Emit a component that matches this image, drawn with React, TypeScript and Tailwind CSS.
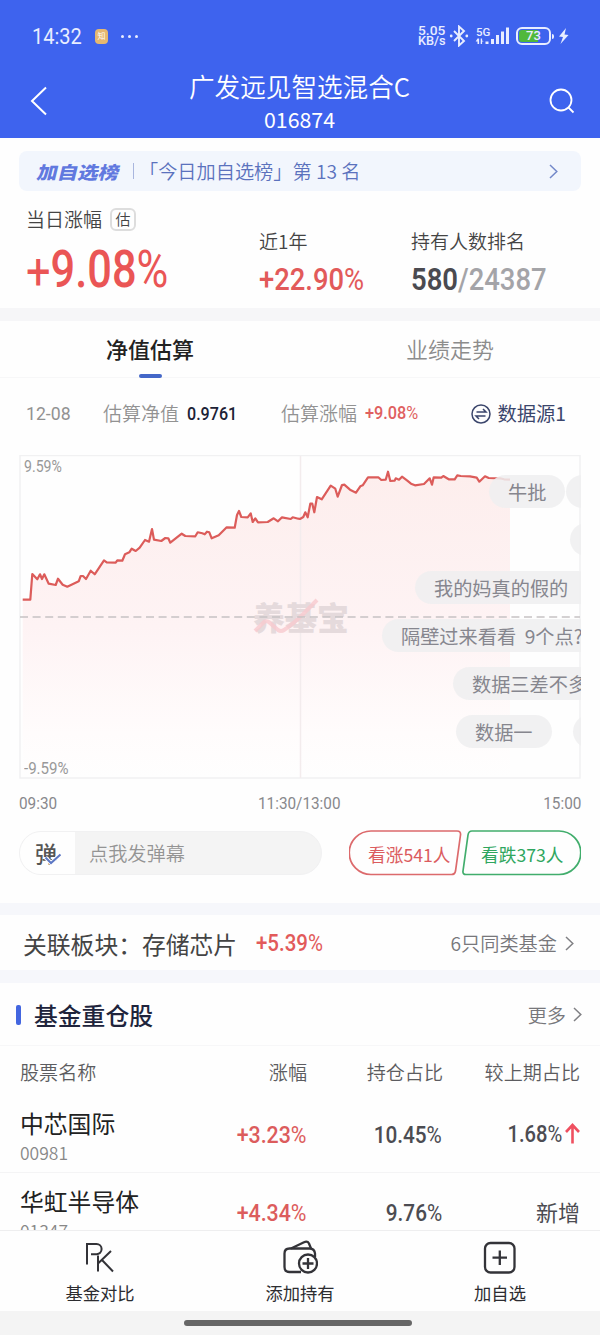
import type { ReactNode } from "react";
import clsx from "clsx";

const linePoints =
  "3.7,144.7 11.3,144.7 13.3,119 18.3,124.3 21,119.3 23,124 25.3,119.3 29.7,128.7 36.7,130 39,123.7 43.7,129.7 48.3,131.7 59.7,126.3 61.7,121 64,121 67,124 71.7,115.7 75.7,119.3 85,105.3 87.7,107.3 96.7,107.7 98.3,105.3 103.3,105.7 106,99.3 110.3,97.3 112.7,93.7 116.7,96 120.7,92.7 126,85 130,86.7 133,74 135,84.7 142.3,86 146.3,83 149.3,83.3 151.3,87.7 162.7,78.7 166.3,81 176.3,81.3 178.7,77.3 183.3,78.3 185.7,79.3 188,76.7 190.3,77.3 192.7,83.3 199.7,80.3 207.7,72.3 215.7,72.7 218,60 220,56 222.3,62 228.7,62.3 231.7,58.3 233.7,67 236.3,63.3 239,67.3 248.7,67 254.7,63.3 259,66.3 263,62.3 271.7,64 273.7,62.3 279.3,63.7 281,64 284.3,62 286.3,57.3 288.7,62.3 291.3,48.7 293.3,48.7 295.3,57.3 298,42 302.7,44.3 311.7,30.7 316.3,33.7 318.7,41.7 323,30 325.3,29.7 331,34.7 337,37.7 341.3,31.3 343.7,30.3 349,22.3 359.3,22.3 362.3,25 366.7,24.7 369,16.7 371.3,26 375.7,25.7 376.7,23.3 380,24.7 383,21.7 388.3,25.7 392,28.7 396,30.3 405,29 410.7,23.3 413,29.7 414.7,22.3 422.3,22.7 424.3,21 429.7,24.3 435.7,24.3 438.3,20.3 441.7,21 451,21.3 457.7,22.7 460.3,26.7 466,21.3 469.7,23 481,23.3 485,24.3 491,24.7";

// Condensed figures
const Num = ({
  className,
  children,
}: {
  className?: string;
  children: ReactNode;
}) => (
  <span
    className={clsx(
      "inline-block whitespace-nowrap font-['Roboto',sans-serif]",
      className
    )}
  >
    {children}
  </span>
);

const Chevron = ({ className }: { className?: string }) => (
  <svg
    className={className}
    width="9"
    height="15"
    viewBox="0 0 9 15"
    fill="none"
    stroke="currentColor"
    strokeWidth="1.5"
  >
    <path d="M1 1l6.8 6.5L1 14" />
  </svg>
);

const StatusBar = () => (
  <div className="flex h-[72px] items-center pl-8 pr-[31px] text-[#e8edff]">
    <Num className="w-[50px] origin-left scale-x-[.91] text-[22px]">14:32</Num>
    <span className="ml-[13px] flex h-[15px] w-[13px] items-center justify-center rounded-[4px] bg-[#e6b870] text-[8px] leading-none text-white">
      知
    </span>
    <span className="ml-[13px] flex gap-[4px]">
      <i className="size-[3px] rounded-full bg-current" />
      <i className="size-[3px] rounded-full bg-current" />
      <i className="size-[3px] rounded-full bg-current" />
    </span>
    <div className="ml-auto flex items-center">
      <div className="w-[28px] font-['Roboto'] text-[12.5px] font-medium leading-[10.5px]">
        <div className="w-[25px] origin-left scale-x-[1.1]">5.05</div>
        <div className="w-[26px] origin-left scale-x-[1.02]">KB/s</div>
      </div>
      <svg
        className="ml-[3px]"
        width="20"
        height="22"
        viewBox="0 0 20 22"
        fill="none"
        stroke="currentColor"
        strokeWidth="1.9"
      >
        <path d="M5 6l10 10-5 4.500V1.500L15 6 5 16" />
        <circle cx="2.200" cy="11" r="1.400" fill="currentColor" stroke="none" />
        <circle cx="17.800" cy="11" r="1.400" fill="currentColor" stroke="none" />
      </svg>
      <svg
        className="ml-[6px]"
        width="36"
        height="20"
        viewBox="0 0 36 20"
        fill="currentColor"
      >
        <text x="1" y="9.500" fontSize="11.500" fontWeight="500" fontFamily="Roboto">
          5G
        </text>
        <path d="M2.500 12.500h1.600v5.500H2.500v-2.500H.7zM5.700 18v-5.500h1.400v2l1.700 1H7.100V18z" />
        <rect x="10.500" y="15.500" width="3" height="2.500" />
        <rect x="16" y="13" width="3" height="5" />
        <rect x="21" y="9" width="3" height="9" />
        <rect x="26" y="5.500" width="3" height="12.500" />
        <rect x="31" y="1.500" width="3" height="16.500" />
      </svg>
      <div className="relative ml-[5px] flex h-[18px] w-[35px] items-center justify-center overflow-hidden rounded-[6px] border-2 border-current font-['Roboto'] text-[13px] font-medium">
        <i className="absolute inset-y-[1px] left-[1px] w-[19px] rounded-l-[3px] bg-[#50b83c]" />
        <span className="relative">73</span>
      </div>
      <i className="ml-[1px] h-[5px] w-[2px] rounded-r bg-current" />
      <svg
        className="ml-[4px]"
        width="11"
        height="16"
        viewBox="0 0 11 16"
        fill="currentColor"
      >
        <path d="M8 0L1 8.500l4 .5-2.500 7L10.500 7 6.500 6.500z" />
      </svg>
    </div>
  </div>
);

const Header = () => (
  <header className="h-[138px] shrink-0 bg-[#3e63ee] text-white">
    <StatusBar />
    <div className="flex h-[58px] items-center justify-between pl-[30px] pr-[25px]">
      <svg
        width="18"
        height="30"
        viewBox="0 0 18 30"
        fill="none"
        stroke="currentColor"
        strokeWidth="2"
      >
        <path d="M16 1.500L2 15l14 13.500" />
      </svg>
      <div className="pl-[2px] pt-[3px] text-center">
        <h1 className="text-[25.6px] leading-[32px] font-[350]">
          广发远见智选混合C
        </h1>
        <div className="pt-[1px] text-[21.3px] leading-[32px]">016874</div>
      </div>
      <svg
        width="26"
        height="26"
        viewBox="0 0 26 26"
        fill="none"
        stroke="currentColor"
        strokeWidth="1.800"
      >
        <circle cx="12" cy="12" r="10.500" />
        <path d="M19.500 19.500l5 5" />
      </svg>
    </div>
  </header>
);

const Summary = () => (
  <section className="h-[170px] shrink-0 px-[19px] pt-[13px]">
    <div className="flex h-10 items-center rounded-[8px] bg-[#f2f6fd] pl-[19px] pr-[23px] text-[#5b72bd]">
      <span className="w-[83px] origin-left -skew-x-12 scale-y-[.86] whitespace-nowrap pt-[1px] text-[20.500px] font-black text-[#6179df]">
        加自选榜
      </span>
      <i className="ml-[12px] h-4 w-px bg-[#a9b6de]" />
      <span className="ml-[5px] whitespace-pre pt-[1px] text-[19.200px] font-[350]">
        「今日加自选榜」第 13 名
      </span>
      <Chevron className="ml-auto text-[#7388c9]" />
    </div>
    <div className="flex pl-[7px] text-[19px] font-[350] text-[#444]">
      <div className="w-[233px] pt-[16px]">
        <div className="flex h-6 items-center">
          当日涨幅
          <span className="ml-[8px] flex h-[23px] w-[26px] items-center justify-center rounded-[6px] border-2 border-[#ddd] text-[15px]">
            估
          </span>
        </div>
        <Num className="mt-[14px] origin-left scale-x-[.85] text-[51px] font-medium leading-[50px] text-[#ea5555]">
          <span className="relative top-[2px] font-normal">+</span>9.08
          <span className="font-normal">%</span>
        </Num>
      </div>
      <div className="w-[152px] pt-[38px]">
        <div className="leading-6">近1年</div>
        <Num className="mt-[8px] origin-left scale-x-[.855] text-[32px] font-medium leading-[36px] text-[#e25a5a]">
          +22.90<span className="font-normal">%</span>
        </Num>
      </div>
      <div className="pt-[38px]">
        <div className="leading-6">持有人数排名</div>
        <Num className="mt-[8px] origin-left scale-x-[.857] text-[32px] font-semibold leading-[36px] text-[#4a4a50]">
          580<span className="font-medium text-[#a4a4a8]">/24387</span>
        </Num>
      </div>
    </div>
  </section>
);

const Tabs = () => (
  <div className="flex h-[57px] shrink-0 border-b border-[#f7f7f8] text-[22px]">
    <div className="relative flex flex-1 justify-center pt-[11px] font-medium leading-8 text-[#222]">
      净值估算
      <i className="absolute bottom-[-1px] h-[4px] w-[23px] rounded-full bg-[#4467c8]" />
    </div>
    <div className="flex flex-1 justify-center pt-[11px] leading-8 font-[350] text-[#8c8c8c]">
      业绩走势
    </div>
  </div>
);

const Bubble = ({
  className,
  children,
}: {
  className: string;
  children?: ReactNode;
}) => (
  <div
    className={clsx(
      "absolute h-[33px] whitespace-pre rounded-full bg-[#eeeef0]/85 pl-[19px] text-[19.200px] leading-[35px] text-[#86868e]",
      className
    )}
  >
    {children}
  </div>
);

const Chart = () => (
  <div className="relative mx-[19px] h-[324px] overflow-hidden">
    <svg width="562" height="324" viewBox="0 0 562 324" fill="none">
      <defs>
        <linearGradient id="area" x1="0" y1="20" x2="0" y2="323" gradientUnits="userSpaceOnUse">
          <stop offset="0" stopColor="#fdeeed" />
          <stop offset=".5" stopColor="#fef3f4" />
          <stop offset=".85" stopColor="#fffcfc" />
          <stop offset="1" stopColor="#fefefe" />
        </linearGradient>
      </defs>
      <polygon points={`3.7,323 ${linePoints} 491,323`} fill="url(#area)" />
      <rect x="1" y=".5" width="560" height="322.500" stroke="#f1f1f2" strokeWidth="1.500" />
      <path d="M281.500 1v322" stroke="#f3eced" strokeWidth="1.500" />
      <text
        x="234"
        y="175"
        fill="#e5dadc"
        fontFamily="Noto Sans CJK SC"
        fontWeight="900"
        fontSize="32"
      >
        养基宝
      </text>
      <path
        d="M236 176l9-9q3-2 6 1l8 7q3 2 6 0c12-7 20-17 33-30"
        stroke="#f8c9ce"
        strokeOpacity=".8"
        strokeWidth="4"
      />
      <path d="M1 162h560" stroke="#c6c2c4" strokeWidth="1.300" strokeDasharray="8 4.600" />
      <polyline points={linePoints} stroke="#dc5c5a" strokeWidth="2.200" strokeLinejoin="round" />
    </svg>
    <Num className="absolute left-[5px] top-[3px] origin-left scale-x-[.88] text-[16px] leading-[18px] text-[#999]">
      9.59%
    </Num>
    <Num className="absolute bottom-[1px] left-[5px] origin-left scale-x-[.94] text-[16px] leading-[18px] text-[#999]">
      -9.59%
    </Num>
    <Bubble className="left-[470px] top-[20px] w-[76px]">牛批</Bubble>
    <Bubble className="left-[547px] top-[20px] w-[76px]" />
    <Bubble className="left-[551px] top-[68px] w-[76px]" />
    <Bubble className="left-[396px] top-[116px] w-[180px]">我的妈真的假的</Bubble>
    <Bubble className="left-[363px] top-[164px] w-[230px]">隔壁过来看看  9个点?</Bubble>
    <Bubble className="left-[434px] top-[212px] w-[190px]">数据三差不多</Bubble>
    <Bubble className="left-[437px] top-[260px] w-[96px]">数据一</Bubble>
    <Bubble className="left-[554px] top-[260px] w-[96px]" />
  </div>
);

const Estimate = () => (
  <section className="h-[525px] shrink-0">
    <div className="flex h-[77px] items-center pl-[26px] pr-[34px] pb-[6px] text-[19px] font-[350] text-[#929292]">
      <Num className="w-[77px] origin-left scale-x-[.93] pt-[1px] text-[19px] font-normal">12-08</Num>
      <span className="w-[84px]">估算净值</span>
      <span className="w-[94px]">
        <Num className="origin-left scale-x-[.87] text-[18.500px] font-medium text-[#1c2236]">
          0.9761
        </Num>
      </span>
      <span className="w-[84px]">估算涨幅</span>
      <Num className="w-[60px] origin-left scale-x-[.88] text-[18.500px] font-medium text-[#e06060]">
        +9.08<span className="font-normal">%</span>
      </Num>
      <span className="ml-auto flex items-center gap-[6px] whitespace-nowrap text-[19.300px] font-normal text-[#3b466c]">
        <svg width="20" height="20" viewBox="0 0 20 20" fill="none" stroke="currentColor" strokeWidth="1.500">
          <circle cx="10" cy="10" r="9" />
          <path d="M5.500 8h9.500l-3-3M14.500 12H5l3 3" />
        </svg>
        数据源1
      </span>
    </div>
    <Chart />
    <div className="relative flex h-[49px] justify-between px-[19px] pt-[13px] font-['Roboto'] text-[17px] leading-[22px] text-[#88888c]">
      <Num className="origin-left scale-x-[.9]">09:30</Num>
      <Num className="absolute left-1/2 origin-left scale-x-[.9] -translate-x-[42px]">11:30/13:00</Num>
      <Num className="origin-right scale-x-[.9]">15:00</Num>
    </div>
    <div className="flex items-center pl-[19px] pr-[19px] pt-[2px]">
      <div className="flex h-[44px] w-[303px] overflow-hidden rounded-full border border-[#f1f1f2] bg-[#f4f4f4]">
        <div className="relative w-[55px] bg-[#fefefe] pl-[15px] text-[22px] font-medium leading-[40px] text-[#555]">
          弹
          <svg className="absolute left-[24px] top-[21px]" width="18" height="13" viewBox="0 0 18 13" fill="none">
            <path d="M1.500 4.500L7 10l9.500-8.500" stroke="#fefefe" strokeWidth="4" />
            <path d="M1.500 4.500L7 10l9.500-8.500" stroke="#5c77c4" strokeWidth="2" />
          </svg>
        </div>
        <span className="pl-[14px] text-[19.200px] leading-[43px] font-[350] text-[#949494]">点我发弹幕</span>
      </div>
      <div className="relative ml-[27px] h-[46px] w-[232px]">
        <svg width="232" height="46" viewBox="0 0 232 46" fill="none" strokeWidth="1.700">
          <path d="M22 1h86q4 0 3.500 4l-5 36q-.6 3.500-4 3.500H22A21.500 21.500 0 0 1 22 1z" stroke="#dc6a6c" />
          <path d="M123 1h87a21.500 21.500 0 0 1 0 43.500h-93q-3.500 0-3-3.500l5-36q.6-4 4-4z" stroke="#41ad6c" />
        </svg>
        <span className="absolute left-[19px] top-[1px] text-[17.700px] leading-[46px] text-[#db5c5e]">看涨541人</span>
        <span className="absolute left-[132px] top-[1px] text-[17.700px] leading-[46px] text-[#2fa65e]">看跌373人</span>
      </div>
    </div>
  </section>
);

const Sector = () => (
  <section className="flex h-[55px] shrink-0 items-center pl-[23px] pr-[26px] pt-[2px]">
    <span className="w-[233px] whitespace-nowrap text-[23.800px] text-[#444]">
      关联板块：存储芯片
    </span>
    <Num className="origin-left scale-x-[.89] pt-[1px] text-[23px] font-medium text-[#e25a5a]">
      +5.39<span className="font-normal">%</span>
    </Num>
    <span className="ml-auto text-[19.200px] font-[350] text-[#77777b]">6只同类基金</span>
    <Chevron className="ml-[8px] text-[#808084]" />
  </section>
);

const stocks = [
  { name: "中芯国际", code: "00981", change: "+3.23", ratio: "10.45", diff: "1.68" },
  { name: "华虹半导体", code: "01347", change: "+4.34", ratio: "9.76", diff: null },
];

const Holdings = () => (
  <section className="h-[247px] shrink-0 overflow-hidden">
    <div className="flex h-[63px] items-center border-b border-[#f7f7f8] pl-4 pr-[18px] pt-[1px]">
      <i className="h-[20px] w-[5px] rounded-[2px] bg-[#4366e0]" />
      <h2 className="ml-[13px] pt-[1px] text-[23.800px] font-medium text-[#20243c]">基金重仓股</h2>
      <span className="ml-auto pt-[1px] text-[19.200px] font-[350] text-[#77777b]">更多</span>
      <Chevron className="ml-[7px] text-[#808084]" />
    </div>
    <div className="flex h-[49px] items-center px-5 pt-[3px] text-right text-[19.100px] font-[350] text-[#5c5c60]">
      <span className="w-[100px] text-left">股票名称</span>
      <span className="w-[187px]">涨幅</span>
      <span className="w-[136px]">持仓占比</span>
      <span className="w-[137px]">较上期占比</span>
    </div>
    {stocks.map((s) => (
      <div
        key={s.code}
        className="flex h-[78px] items-center border-b border-[#f4f4f5] px-5 text-right text-[24px] font-medium text-[#4c4c52]"
      >
        <div className="w-[120px] whitespace-nowrap pt-[5px] text-left font-normal">
          <div className="text-[23.800px] leading-[34px] text-[#222]">{s.name}</div>
          <div className="text-[17.500px] font-[350] leading-[26px] text-[#888]">{s.code}</div>
        </div>
        <span className="w-[167px]">
          <Num className="origin-right scale-x-[.89] text-[#dc5c5c]">
            {s.change}
            <span className="font-normal">%</span>
          </Num>
        </span>
        <span className="w-[136px]">
          <Num className="origin-right scale-x-[.865]">
            {s.ratio}
            <span className="font-normal">%</span>
          </Num>
        </span>
        <span className="flex w-[138px] items-center justify-end">
          {s.diff ? (
            <>
              <Num className="origin-right scale-x-[.84] pt-[1px]">
                {s.diff}
                <span className="font-normal">%</span>
              </Num>
              <svg className="ml-[3px]" width="15" height="21" viewBox="0 0 15 21" fill="none" stroke="#ef5060" strokeWidth="2.600">
                <path d="M7.500 20.500V2M1 9l6.500-7L14 9" />
              </svg>
            </>
          ) : (
            <span className="text-[22px] font-normal">新增</span>
          )}
        </span>
      </div>
    ))}
  </section>
);

const PkIcon = () => (
  <svg width="32" height="36" viewBox="0 0 32 36" fill="none" stroke="#333338" strokeWidth="2">
    <path d="M3 25.500V5h9.500a5 5 0 0 1 0 10.200H7M14 16.500V32.500M27 12L14 24.500M18 21L29 32.500" />
  </svg>
);

const WalletIcon = () => (
  <svg width="36" height="36" viewBox="0 0 36 36" fill="none" stroke="#333338" strokeWidth="2.300">
    <path d="M19 33H7.500q-5 0-5-5V14.500q0-5 5-5h20q5 0 5.500 5V18" />
    <path d="M9 9.500L22 3.200q3.500-1.500 5 1.300l2 5" />
    <circle cx="26" cy="24.500" r="9" />
    <path d="M26 19v11M20.500 24.500h11" />
  </svg>
);

const AddIcon = () => (
  <svg width="34" height="36" viewBox="0 0 34 36" fill="none" stroke="#333338" strokeWidth="2.300">
    <rect x="2" y="4" width="29.500" height="29.500" rx="5.500" />
    <path d="M16.800 11.500V26M9.500 18.700h14.500" />
  </svg>
);

const actions = [
  { label: "基金对比", icon: <PkIcon /> },
  { label: "添加持有", icon: <WalletIcon /> },
  { label: "加自选", icon: <AddIcon /> },
];

const App = () => {
  return (
    <div className="flex h-[1335px] w-[600px] flex-col overflow-hidden bg-[#fefefe] font-['Noto_Sans_CJK_SC',sans-serif]">
      <Header />
      <Summary />
      <div className="h-[13px] shrink-0 bg-[#f6f6f8]" />
      <Tabs />
      <Estimate />
      <div className="h-3 shrink-0 bg-[#f6f7fb]" />
      <Sector />
      <div className="h-[13px] shrink-0 bg-[#f6f7fb]" />
      <Holdings />

      {/* Bottom actions */}
      <nav className="flex h-[81px] shrink-0 border-t border-[#eeeeef] text-[17.300px] text-[#2c2c30]">
        {actions.map((a) => (
          <div key={a.label} className="flex flex-1 flex-col items-center pt-[8px]">
            {a.icon}
            <span className="mt-[6px] leading-[24px]">{a.label}</span>
          </div>
        ))}
      </nav>
      <div className="flex h-6 shrink-0 justify-center bg-[#f4f4f4] pr-[4px] pt-[9px]">
        <i className="h-[6px] w-[228px] rounded-full bg-[#666]" />
      </div>
    </div>
  );
};

export default App;
